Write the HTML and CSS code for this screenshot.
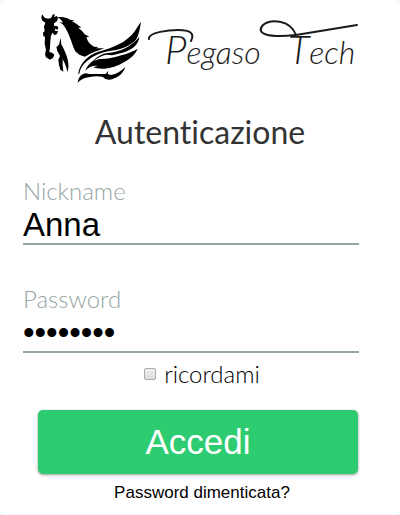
FILE: index.html
```
<!DOCTYPE html>
<html lang="it">
<head>
  <meta charset="UTF-8">
  <meta name="viewport" content="width=device-width, initial-scale=1.0">
  <title>Pegaso Tech - Autenticazione</title>
  <link rel="stylesheet" href="styles.css">
</head>
<body>
  <main class="login-card">
    <svg class="logo" viewBox="0 0 320 78" role="img" aria-label="Pegaso Tech">
      <!-- horse -->
      <g transform="translate(-5 -5) scale(.3333)">
        <path d="M21 28 L29 38 L39 41 L48 39 L53 29 L60 27 L57 36 L66 33 L69 39 L66 49 L57 55 L57 63 L64 62 L70 67 L68 74 L61 71 L59 77 L69 79 L66 87 L59 91 L52 83 L48 93 L46 108 L45 126 L43 141 L51 143 L58 149 L54 159 L45 164 L33 157 L30 148 L33 134 L29 116 L30 96 L25 93 L24 83 L29 78 L27 65 L31 53 L22 47 L19 38Z"/>
        <path d="M67 37 C79 34 94 36 105 44 L120 47 L111 49 C123 55 132 62 139 69 L129 68 C139 75 145 81 149 88 L163 95 L154 97 C157 109 165 119 177 125 L190 126 L184 130 L208 130 C190 137 169 143 150 155 C137 153 128 147 121 139 C114 126 110 110 104 96 C98 80 90 66 83 58 L73 51 L84 53 C80 46 75 41 67 37Z"/>
        <path d="M77 98 L79 118 C86 131 95 148 99 168 C101 181 101 193 97 201 C94 184 89 174 83 163 L83 179 L85 200 L76 194 L72 180 L70 164 L75 153 L67 138 L64 126 L72 119Z"/>
        <path d="M318 50 C315 72 311 91 303 104 C284 124 258 133 228 137 C193 143 169 154 150 174 C140 183 135 194 133 206 L130 208 C131 188 143 170 160 156 C177 142 197 138 220 131 C257 119 279 104 297 82Z"/>
        <path d="M313 96 C312 108 307 117 297 126 C278 141 253 146 230 151 L215 149 C201 151 187 158 177 168 L186 164 C200 160 212 163 230 158 C260 151 284 145 308 131 C301 148 287 160 268 171 C248 183 227 190 209 191 C194 192 183 190 174 187 L188 183 C174 181 160 187 151 198 C154 185 163 175 177 165 C187 154 201 146 218 144 C253 142 287 126 313 96Z"/>
        <path d="M271 186 C266 203 252 216 231 223 C220 226 210 223 204 216 C185 211 169 215 153 218 C143 220 135 226 128 233 C130 218 138 208 151 205 L164 207 C181 207 198 207 212 207 L220 197 L218 207 L228 210 C245 207 258 198 271 186Z"/>
      </g>
      <!-- flourishes around the name -->
      <g class="flourish">
        <path d="M109 29 C108 22 130 20 138 20 C150 20 155 23 151 31"/>
        <path d="M256 25 C250 9 230 9 223 15 C215 24 228 28 256 25 L317 15"/>
      </g>
      <text class="logo-text" x="125" y="54"><tspan class="initial">P</tspan>egaso</text>
      <text class="logo-text" x="248" y="54"><tspan class="initial">T</tspan>ech</text>
    </svg>

    <h1>Autenticazione</h1>

    <form class="login-form">
      <div class="field">
        <label for="nickname">Nickname</label>
        <input type="text" id="nickname" name="nickname" value="Anna">
      </div>
      <div class="field">
        <label for="password">Password</label>
        <input type="password" id="password" name="password" value="pegaso12">
      </div>
      <div class="remember">
        <input type="checkbox" id="remember" name="remember">
        <label for="remember">ricordami</label>
      </div>
      <button type="submit">Accedi</button>
    </form>

    <a class="forgot" href="#">Password dimenticata?</a>
  </main>
</body>
</html>
```
FILE: styles.css
```
* {
  box-sizing: border-box;
}
body {
  margin: 0;
  background-color: #f5fcf8;
  font-family: Lato, sans-serif;
}
.login-card {
  display: flex;
  flex-direction: column;
  min-height: 100vh;
  padding: 10px 23px;
  background-color: #fff;
  border-radius: 8px;
}
.logo {
  display: block;
  width: 100%;
  max-width: 320px;
  margin: 0 auto;
}
.logo-text {
  font-family: Lato, sans-serif;
  font-size: 32px;
  font-style: italic;
  font-weight: 300;
  fill: #1a1a1a;
}
.logo-text .initial {
  font-size: 40px;
}
.flourish {
  fill: none;
  stroke: #1a1a1a;
  stroke-width: 2;
  stroke-linecap: round;
}
h1 {
  margin: 24px 0;
  font-size: 32px;
  line-height: 40px;
  font-weight: 400;
  font-variant-ligatures: none;
  text-align: center;
  color: #333;
}
.field {
  width: 95%;
}
.field + .field {
  margin-top: 39px;
}
.field label {
  display: block;
  font-size: 24px;
  line-height: 30px;
  font-weight: 300;
  color: #95a5a6;
}
.field input {
  display: block;
  width: 100%;
  height: 39px;
  padding: 0;
  border: 0;
  border-bottom: 2px solid #95a5a6;
  background: none;
  font-family: "Liberation Sans", Arial, sans-serif;
  font-size: 33px;
  color: #000;
  outline: none;
}
.remember {
  display: flex;
  align-items: center;
  justify-content: center;
  gap: 8px;
  margin: 6px 0 21px;
  padding-left: 4px;
  font-size: 24px;
  line-height: 30px;
  font-weight: 300;
}
.remember input {
  appearance: none;
  width: 12px;
  height: 12px;
  margin: 0;
  border: 1px solid #aaa;
  border-radius: 2px;
  background: linear-gradient(#eee, #dcdcdc);
}
.remember input:checked {
  background: #2ecc71;
}
button {
  display: block;
  width: calc(100% - 34px);
  height: 64px;
  margin: 0 19px 0 15px;
  border: 0;
  border-radius: 5px;
  background-color: #2ecc71;
  box-shadow: 0 1px 3px rgba(0, 0, 0, 0.4);
  font-family: "Liberation Sans", Arial, sans-serif;
  font-size: 35px;
  color: #fff;
  cursor: pointer;
}
.forgot {
  align-self: center;
  margin-top: 9px;
  padding-left: 4px;
  font-family: "Liberation Sans", Arial, sans-serif;
  font-size: 17px;
  line-height: 20px;
  color: #000;
  text-decoration: none;
}
```
